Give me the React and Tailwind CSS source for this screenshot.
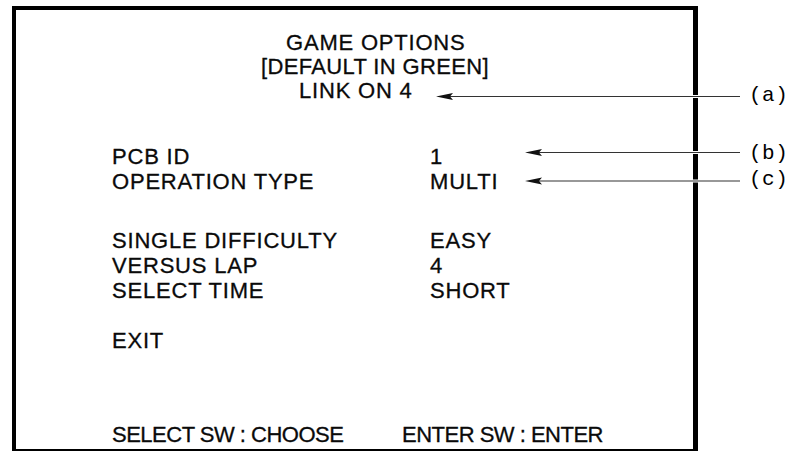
import React from "react";

const options = [
  { label: "PCB ID", value: "1" },
  { label: "OPERATION TYPE", value: "MULTI" },
];

const settings = [
  { label: "SINGLE DIFFICULTY", value: "EASY" },
  { label: "VERSUS LAP", value: "4" },
  { label: "SELECT TIME", value: "SHORT" },
];

// callout arrows pointing into the test screen
const callouts = [
  { key: "a", y: 96.5, tip: 436, labelTop: 84 },
  { key: "b", y: 152.5, tip: 525, labelTop: 142 },
  { key: "c", y: 181, tip: 525, labelTop: 168 },
];

const Row = ({ label, value }) => (
  <div className="flex h-[25px] leading-[25px]">
    <span className="w-[318px]">{label}</span>
    <span>{value}</span>
  </div>
);

const App = () => {
  return (
    <div className="relative w-[791px] h-[451px] bg-white overflow-hidden text-[#0a0a0a]">
      {/* Screen frame */}
      <div
        className="ml-[12px] mt-[6px] w-[686px] h-[445px] border-l-4 border-t-4 border-r-[5px] border-b-2 border-black flex flex-col text-[22px] tracking-[0.8px] [-webkit-text-stroke:0.3px_#0a0a0a]"
        style={{ fontFamily: '"Liberation Sans", Arial, sans-serif' }}
      >
        {/* Header */}
        <div className="pt-[21px] leading-[24px]">
          <div className="pl-[270px] h-[24px]">GAME OPTIONS</div>
          <div className="pl-[245px] h-[24px] tracking-[0.35px]">[DEFAULT IN GREEN]</div>
          <div className="pl-[283px] h-[24px]">LINK ON 4</div>
        </div>

        <div className="pl-[96px]">
          <div className="mt-[41px]">
            {options.map((o) => (
              <Row key={o.label} {...o} />
            ))}
          </div>
          <div className="mt-[34px]">
            {settings.map((o) => (
              <Row key={o.label} {...o} />
            ))}
          </div>
          <div className="mt-[25px] h-[25px] leading-[25px]">EXIT</div>
          <div className="mt-[69px] flex h-[25px] leading-[25px] tracking-[-0.5px]">
            <span className="w-[290px]">SELECT SW : CHOOSE</span>
            <span>ENTER SW : ENTER</span>
          </div>
        </div>
      </div>

      {/* Annotation arrows */}
      <svg className="absolute left-0 top-0" width="791" height="451">
        {callouts.map((c) => (
          <g key={c.key}>
            <rect x="692" y={c.y - 1.5} width="7" height="3" fill="#fff" />
            <line x1={c.tip + 14} y1={c.y} x2="740" y2={c.y} stroke="#333" strokeWidth="1.1" />
            <polygon
              points={`${c.tip},${c.y} ${c.tip + 17},${c.y - 3.5} ${c.tip + 14},${c.y} ${c.tip + 17},${c.y + 3.5}`}
              fill="#111"
            />
          </g>
        ))}
      </svg>

      {callouts.map((c) => (
        <div
          key={c.key}
          className="absolute left-[749px] text-[21px] leading-[24px] tracking-[0.5px] text-black"
          style={{ top: c.labelTop, fontFamily: '"Liberation Mono", "DejaVu Sans Mono", monospace' }}
        >
          ({c.key})
        </div>
      ))}
    </div>
  );
};

export default App;
